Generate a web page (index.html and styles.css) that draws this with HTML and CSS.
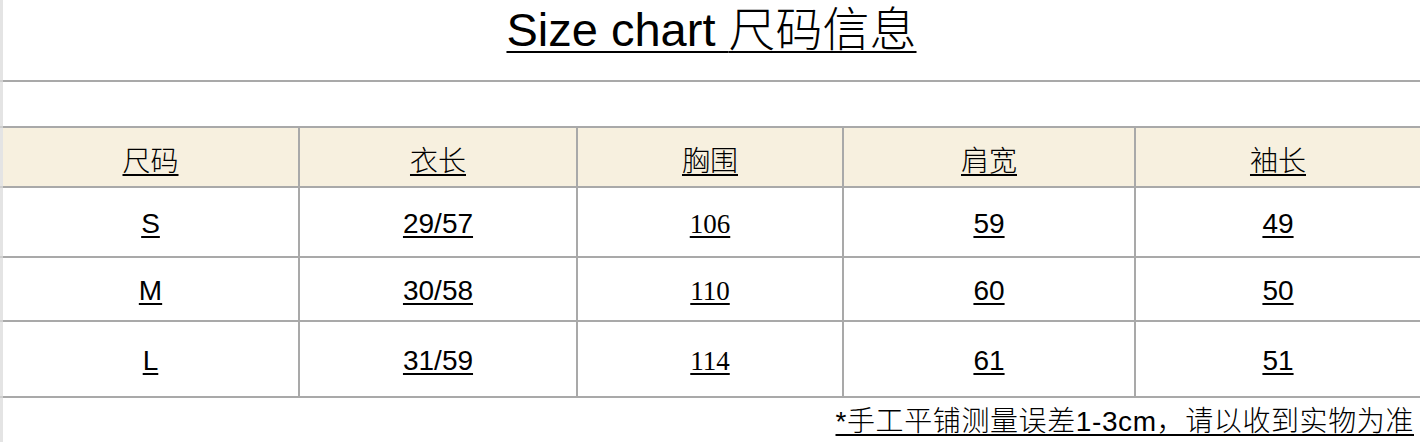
FILE: index.html
```html
<!DOCTYPE html>
<html lang="zh-CN">
<head>
<meta charset="utf-8">
<title>Size chart 尺码信息</title>
<link rel="stylesheet" href="styles.css">
</head>
<body>
<div class="page">
  <div class="gutter">
    <div class="g g-title"></div>
    <div class="g g-empty"></div>
    <div class="g g-head"></div>
    <div class="g g-s"></div>
    <div class="g g-m"></div>
    <div class="g g-l"></div>
    <div class="g g-foot"></div>
  </div>
  <div class="sheet">
    <div class="row row-title"><span class="title u">Size chart <span class="title-cjk">尺码信息</span></span></div>
    <div class="row row-empty"></div>
    <div class="row grid row-head">
      <div class="cell"><span class="u cjk">尺码</span></div>
      <div class="cell"><span class="u cjk">衣长</span></div>
      <div class="cell"><span class="u cjk">胸围</span></div>
      <div class="cell"><span class="u cjk">肩宽</span></div>
      <div class="cell"><span class="u cjk">袖长</span></div>
    </div>
    <div class="row grid row-s">
      <div class="cell"><span class="u sans">S</span></div>
      <div class="cell"><span class="u sans">29/57</span></div>
      <div class="cell"><span class="u serif">106</span></div>
      <div class="cell"><span class="u sans">59</span></div>
      <div class="cell"><span class="u sans">49</span></div>
    </div>
    <div class="row grid row-m">
      <div class="cell"><span class="u sans">M</span></div>
      <div class="cell"><span class="u sans">30/58</span></div>
      <div class="cell"><span class="u serif">110</span></div>
      <div class="cell"><span class="u sans">60</span></div>
      <div class="cell"><span class="u sans">50</span></div>
    </div>
    <div class="row grid row-l">
      <div class="cell"><span class="u sans">L</span></div>
      <div class="cell"><span class="u sans">31/59</span></div>
      <div class="cell"><span class="u serif">114</span></div>
      <div class="cell"><span class="u sans">61</span></div>
      <div class="cell"><span class="u sans">51</span></div>
    </div>
    <div class="row-foot"><span class="u sans note">*手工平铺测量误差1-3cm，请以收到实物为准</span></div>
  </div>
</div>
</body>
</html>
```

FILE: styles.css
```css
html, body {
  margin: 0;
  padding: 0;
  background: #ffffff;
}

body {
  width: 1420px;
  height: 442px;
  overflow: hidden;
  color: #000;
  font-family: "Liberation Sans", "Noto Sans CJK SC", sans-serif;
}

.page {
  display: flex;
  width: 1420px;
  height: 442px;
}

.gutter {
  width: 3px;
  flex: none;
  background: #e4e4e4;
  display: flex;
  flex-direction: column;
}

.g {
  border-bottom: 2px solid #cfcfcf;
  flex: none;
}
.g-title { height: 80px; }
.g-empty { height: 44px; }
.g-head { height: 58px; }
.g-s { height: 68px; }
.g-m { height: 62px; }
.g-l { height: 74px; }
.g-foot { flex: 1; border-bottom: none; }

.sheet {
  flex: 1;
  display: flex;
  flex-direction: column;
}

.row {
  border-bottom: 2px solid #a9a9a9;
  flex: none;
}

.row-title {
  height: 80px;
  display: flex;
  justify-content: center;
  align-items: flex-start;
}

.title {
  display: block;
  font-family: "Liberation Sans", "Noto Sans CJK SC", sans-serif;
  padding-top: 4px;
}

.title-cjk {
  display: inline-block;
  font-family: "Noto Sans CJK SC", sans-serif;
  font-weight: 300;
  line-height: 44px;
  text-decoration: underline;
  text-decoration-thickness: 2px;
  text-underline-offset: 5px;
}

.row-empty { height: 44px; }

.grid {
  display: grid;
  grid-template-columns: 295px 278px 266px 292px 1fr;
}

.row-head { height: 58px; background: #f7f0df; }
.row-s { height: 68px; }
.row-m { height: 62px; }
.row-l { height: 74px; }

.cell {
  display: flex;
  align-items: center;
  justify-content: center;
  padding-top: 4px;
  box-sizing: border-box;
}
.cell + .cell {
  border-left: 2px solid #a9a9a9;
}

.u {
  text-decoration: underline;
  text-decoration-thickness: 2px;
  text-underline-offset: 3px;
  font-size: 28px;
  line-height: 32px;
}

.title.u {
  font-size: 47px;
  line-height: 48px;
  text-underline-offset: 5px;
}

.cjk {
  font-family: "Noto Sans CJK SC", sans-serif;
  font-weight: 300;
}

.sans {
  font-family: "Liberation Sans", "Noto Sans CJK SC", sans-serif;
}

.serif {
  font-family: "Liberation Serif", serif;
  font-size: 27px;
}

.row-foot {
  flex: 1;
  display: flex;
  justify-content: flex-end;
  align-items: center;
  padding-right: 6px;
  padding-top: 4px;
}

.note {
  font-size: 28px;
  font-weight: 300;
  letter-spacing: 0.6px;
}
```
